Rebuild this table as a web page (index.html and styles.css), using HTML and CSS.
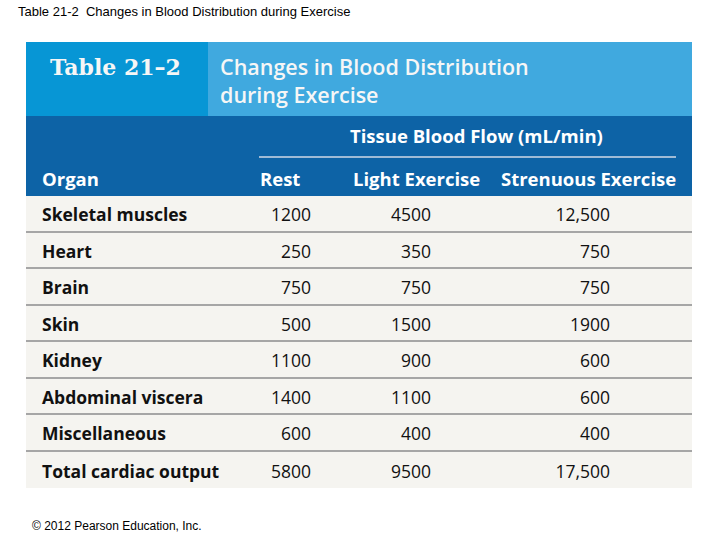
FILE: index.html
```html
<!DOCTYPE html>
<html>
<head>
<meta charset="utf-8">
<link rel="stylesheet" href="styles.css">
</head>
<body>
<div class="caption">Table 21-2&nbsp; Changes in Blood Distribution during Exercise</div>
<div class="table">
  <div class="title">
    <div class="tnum">Table 21–2</div>
    <div class="tname">Changes in Blood Distribution<br>during Exercise</div>
  </div>
  <div class="head">
    <div class="flow"><span>Tissue Blood Flow (mL/min)</span></div>
    <div class="grid hrow">
      <div class="c0">Organ</div>
      <div class="c1">Rest</div>
      <div class="c2">Light Exercise</div>
      <div class="c3">Strenuous Exercise</div>
    </div>
  </div>
  <div class="body">
    <div class="grid row"><div class="c0">Skeletal muscles</div><div class="c1">1200</div><div class="c2">4500</div><div class="c3">12,500</div></div>
    <div class="grid row"><div class="c0">Heart</div><div class="c1">250</div><div class="c2">350</div><div class="c3">750</div></div>
    <div class="grid row"><div class="c0">Brain</div><div class="c1">750</div><div class="c2">750</div><div class="c3">750</div></div>
    <div class="grid row"><div class="c0">Skin</div><div class="c1">500</div><div class="c2">1500</div><div class="c3">1900</div></div>
    <div class="grid row"><div class="c0">Kidney</div><div class="c1">1100</div><div class="c2">900</div><div class="c3">600</div></div>
    <div class="grid row"><div class="c0">Abdominal viscera</div><div class="c1">1400</div><div class="c2">1100</div><div class="c3">600</div></div>
    <div class="grid row"><div class="c0">Miscellaneous</div><div class="c1">600</div><div class="c2">400</div><div class="c3">400</div></div>
    <div class="grid row last"><div class="c0">Total cardiac output</div><div class="c1">5800</div><div class="c2">9500</div><div class="c3">17,500</div></div>
  </div>
</div>
<div class="footer">© 2012 Pearson Education, Inc.</div>
</body>
</html>
```
FILE: styles.css
```css
html, body {
  margin: 0;
  padding: 0;
  background: #ffffff;
}
body {
  width: 720px;
  height: 540px;
  overflow: hidden;
  font-family: "Open Sans", "Noto Sans", sans-serif;
}
.caption {
  font-family: "Liberation Sans", Arial, sans-serif;
  font-size: 13px;
  line-height: 15px;
  color: #000;
  padding: 4px 0 0 18px;
  height: 23px;
  box-sizing: border-box;
}
.table {
  margin: 19px 0 0 26px;
  width: 666px;
}
.title {
  display: flex;
  height: 74px;
}
.tnum {
  width: 182px;
  background: #0796d5;
  color: #f6f6f6;
  font-family: "DejaVu Serif", serif;
  font-weight: bold;
  font-size: 22px;
  padding: 12px 0 0 24px;
  box-sizing: border-box;
}
.tname {
  flex: 1;
  background: #40a9df;
  color: #f6f6f6;
  font-weight: 600;
  font-size: 21.5px;
  line-height: 28px;
  padding: 11px 0 0 12px;
}
.head {
  background: #0d63a6;
  height: 80px;
  color: #ffffff;
  font-weight: 700;
  font-size: 18.5px;
}
.flow {
  margin-left: 233px;
  width: 417px;
  border-bottom: 2px solid #9fbbd6;
  height: 42px;
  box-sizing: border-box;
  padding: 7px 0 0 91px;
}
.grid {
  display: grid;
  grid-template-columns: 233px 81px 150px 202px;
  align-items: center;
}
.hrow {
  height: 38px;
  padding-top: 2px;
  box-sizing: border-box;
}
.hrow .c0 { padding-left: 16px; }
.hrow .c1 { padding-left: 1px; }
.hrow .c2 { padding-left: 13px; }
.hrow .c3 { padding-left: 11px; }
.body {
  background: #f5f4f0;
}
.row {
  height: 36.5px;
  border-bottom: 2px solid #a6a6a6;
  box-sizing: border-box;
  padding-top: 2px;
  color: #111;
  font-size: 17.5px;
}
.row.last {
  border-bottom: none;
}
.row .c0 {
  font-weight: 700;
  padding-left: 16px;
}
.row .c1, .row .c2, .row .c3 {
  text-align: right;
}
.row .c1 { padding-right: 29px; }
.row .c2 { padding-right: 59px; }
.row .c3 { padding-right: 82px; }
.footer {
  font-family: "Liberation Sans", Arial, sans-serif;
  font-size: 12px;
  color: #000;
  padding: 31px 0 0 32px;
}
```
